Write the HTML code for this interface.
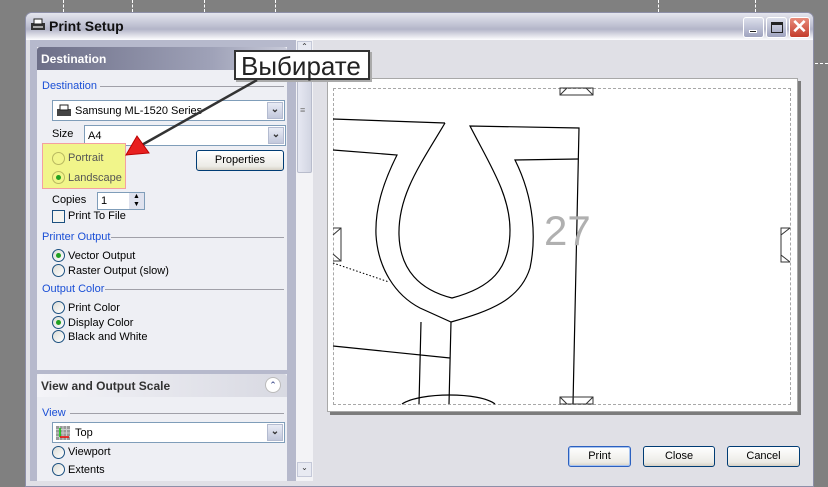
<!DOCTYPE html><html><head><meta charset="utf-8"><style>
*{margin:0;padding:0;box-sizing:border-box}
body{width:828px;height:481px;background:#808080;position:relative;overflow:hidden;font-family:"Liberation Sans",sans-serif;font-size:11px;color:#000}
.a{position:absolute}
.t{position:absolute;white-space:nowrap}
.blue{color:#1a4fd6}
.rad{position:absolute;width:13px;height:13px;border-radius:50%;border:1px solid #1c5180;background:linear-gradient(135deg,#dcdcd6,#fff)}
.rad.on::after{content:"";position:absolute;left:3px;top:3px;width:5px;height:5px;border-radius:50%;background:#21a121}
.btn{position:absolute;border:1px solid #003c74;border-radius:3px;background:linear-gradient(#fff,#ecebe6 80%,#d6d0c5);text-align:center;font-size:11px;line-height:19px}
.dd{position:absolute;background:#fff;border:1px solid #7f9db9}
.dda{position:absolute;right:1px;top:1px;width:16px;bottom:1px;background:linear-gradient(#e8ebf5,#c2c8dc);border:1px solid #b3bbd0;font-size:10px;font-weight:bold;text-align:center;line-height:14px;color:#333}
.line{position:absolute;height:1px;background:#a0a0a8}
</style></head><body>
<div class="a" style="left:63px;top:0;height:12px;border-left:1px dashed #fff"></div>
<div class="a" style="left:132px;top:0;height:12px;border-left:1px dashed #fff"></div>
<div class="a" style="left:204px;top:0;height:12px;border-left:1px dashed #fff"></div>
<div class="a" style="left:275px;top:0;height:12px;border-left:1px dashed #fff"></div>
<div class="a" style="left:658px;top:0;height:12px;border-left:1px dashed #fff"></div>
<div class="a" style="left:755px;top:0;height:12px;border-left:1px dashed #fff"></div>
<div class="a" style="left:815px;top:63px;width:13px;border-top:1px dashed #fff"></div>
<div class="a" style="left:25px;top:12px;width:789px;height:475px;border:1px solid #8d8fa8;border-radius:7px 7px 0 0;background:#e0e0e6"></div>
<div class="a" style="left:26px;top:13px;width:787px;height:27px;border-radius:6px 6px 0 0;background:linear-gradient(#e4e5ee,#c4c6d6 40%,#b3b5c8 60%,#fefeff)"></div>
<svg class="a" style="left:30px;top:17px" width="16" height="16"><rect x="1" y="6" width="14" height="7" fill="#333"/><rect x="4" y="2" width="8" height="5" fill="#fff" stroke="#222"/><rect x="3" y="9" width="10" height="2" fill="#aaa"/></svg>
<div class="t" style="left:49px;top:18px;font-size:14px;font-weight:bold;color:#111">Print Setup</div>
<div class="a" style="left:743px;top:17px;width:21px;height:21px;border:1px solid #fff;border-radius:3px;background:linear-gradient(#dcdfeb,#9fa3bf)"><div class="a" style="left:5px;top:12px;width:8px;height:3px;background:#222;border:1px solid #fff"></div></div>
<div class="a" style="left:766px;top:17px;width:21px;height:21px;border:1px solid #fff;border-radius:3px;background:linear-gradient(#dcdfeb,#9fa3bf)"><div class="a" style="left:4px;top:4px;width:12px;height:11px;border:1px solid #222;border-top-width:3px"></div></div>
<div class="a" style="left:789px;top:17px;width:21px;height:21px;border:1px solid #fff;border-radius:3px;background:linear-gradient(#e88c7c,#c43c2c);color:#fff;font-size:19px;line-height:19px;text-align:center;font-weight:bold">✕</div>
<div class="a" style="left:30px;top:40px;width:266px;height:441px;background:#b6b9cc"></div>
<div class="a" style="left:37px;top:47px;width:250px;height:323px;background:#eeeff4"></div>
<div class="a" style="left:37px;top:47px;width:250px;height:23px;background:linear-gradient(90deg,#6d6f88,#9fa2b8 70%,#c7c9d8);border-radius:3px 3px 0 0"></div>
<div class="t" style="left:41px;top:52px;font-weight:bold;color:#fff;font-size:12px">Destination</div>
<div class="t blue" style="left:42px;top:80px">Destination</div><div class="line" style="left:100px;top:86px;width:184px"></div>
<div class="dd" style="left:52px;top:100px;width:233px;height:21px"><svg class="a" style="left:3px;top:3px" width="16" height="14"><rect x="1" y="5" width="14" height="7" fill="#444"/><rect x="4" y="1" width="8" height="5" fill="#fff" stroke="#222"/></svg><div class="t" style="left:22px;top:4px">Samsung ML-1520 Series</div><div class="dda">⌄</div></div>
<div class="t" style="left:52px;top:128px">Size</div>
<div class="dd" style="left:84px;top:125px;width:202px;height:21px"><div class="t" style="left:3px;top:4px">A4</div><div class="dda">⌄</div></div>
<div class="a" style="left:42px;top:143px;width:84px;height:46px;background:#f1f58a;border:1px solid #f4a0a0"></div>
<div class="rad" style="left:52px;top:152px;border-color:#b8b860;background:#f1f58a"></div><div class="t" style="left:68px;top:152px;color:#555">Portrait</div>
<div class="rad on" style="left:52px;top:171px;border-color:#b8b860;background:#f1f58a"></div><div class="t" style="left:68px;top:172px;color:#555">Landscape</div>
<div class="btn" style="left:196px;top:150px;width:88px;height:21px">Properties</div>
<div class="t" style="left:52px;top:194px">Copies</div>
<div class="a" style="left:97px;top:192px;width:48px;height:18px;background:#fff;border:1px solid #7f9db9"><div class="t" style="left:3px;top:2px">1</div><div class="a" style="right:0;top:0;width:15px;height:16px;background:#dfe2ee;font-size:7px;line-height:8px;text-align:center">▲<br>▼</div></div>
<div class="a" style="left:52px;top:210px;width:13px;height:13px;border:1px solid #1c5180;background:#f4f4f0"></div><div class="t" style="left:68px;top:210px">Print To File</div>
<div class="t blue" style="left:42px;top:231px">Printer Output</div><div class="line" style="left:111px;top:237px;width:173px"></div>
<div class="rad on" style="left:52px;top:249px"></div><div class="t" style="left:68px;top:250px">Vector Output</div>
<div class="rad" style="left:52px;top:264px"></div><div class="t" style="left:68px;top:265px">Raster Output (slow)</div>
<div class="t blue" style="left:42px;top:283px">Output Color</div><div class="line" style="left:105px;top:289px;width:179px"></div>
<div class="rad" style="left:52px;top:301px"></div><div class="t" style="left:68px;top:302px">Print Color</div>
<div class="rad on" style="left:52px;top:316px"></div><div class="t" style="left:68px;top:317px">Display Color</div>
<div class="rad" style="left:52px;top:330px"></div><div class="t" style="left:68px;top:331px">Black and White</div>
<div class="a" style="left:37px;top:374px;width:250px;height:107px;background:#eeeff4"></div>
<div class="a" style="left:37px;top:374px;width:250px;height:23px;background:linear-gradient(90deg,#f4f4f8,#d8d9e2);border-radius:3px 3px 0 0"></div>
<div class="t" style="left:41px;top:379px;font-weight:bold;font-size:12px;color:#333">View and Output Scale</div>
<div class="a" style="left:265px;top:377px;width:16px;height:16px;border-radius:50%;background:#fff;border:1px solid #bbb;font-size:9px;text-align:center;line-height:14px;color:#2a3a80">⌃</div>
<div class="t blue" style="left:42px;top:407px">View</div><div class="line" style="left:70px;top:413px;width:214px"></div>
<div class="dd" style="left:52px;top:422px;width:233px;height:21px"><svg class="a" style="left:3px;top:3px" width="14" height="14"><rect width="14" height="14" fill="#999"/><path d="M0 3.5H14M0 7H14M0 10.5H14M3.5 0V14M7 0V14M10.5 0V14" stroke="#ccc"/><path d="M4 2V11" stroke="#0c0" stroke-width="1.5"/><path d="M4 11H13" stroke="#e00" stroke-width="1.5"/></svg><div class="t" style="left:22px;top:4px">Top</div><div class="dda">⌄</div></div>
<div class="rad" style="left:52px;top:446px"></div><div class="t" style="left:68px;top:446px">Viewport</div>
<div class="rad" style="left:52px;top:463px"></div><div class="t" style="left:68px;top:464px">Extents</div>
<div class="a" style="left:296px;top:40px;width:17px;height:441px;background:#f3f3f6"></div>
<div class="a" style="left:297px;top:41px;width:15px;height:15px;background:#e8eaf2;border:1px solid #c4c8d8;font-size:8px;text-align:center;color:#333">⌃</div>
<div class="a" style="left:297px;top:57px;width:15px;height:116px;background:linear-gradient(90deg,#e6e8f2,#d2d5e2);border:1px solid #b8bccc;border-radius:2px"></div>
<div class="t" style="left:300px;top:105px;font-size:9px;color:#777">≡</div>
<div class="a" style="left:297px;top:462px;width:15px;height:15px;background:#e8eaf2;border:1px solid #c4c8d8;font-size:8px;text-align:center;color:#333">⌄</div>
<div class="a" style="left:330px;top:81px;width:471px;height:334px;background:#7c7c7c"></div>
<div class="a" style="left:327px;top:78px;width:471px;height:334px;background:#fff;border:1px solid #a8a8a8"></div>
<div class="a" style="left:333px;top:88px;width:458px;height:317px;border:1px dashed #a8a8a8"></div>
<svg class="a" style="left:0;top:0" width="828" height="481" fill="none" stroke="#000" stroke-width="1.2">
<path d="M333 119 L445 123"/>
<path d="M333 150 L397 155 C382 185 375 210 376 235 C378 268 395 295 420 308 L451 322 C490 311 520 300 530 268 C536 240 535 200 515 160 L578 159"/>
<path d="M445 123 C420 165 398 195 399 235 C400 270 420 290 452 298 C490 288 510 270 510 230 C510 195 490 165 470 126 L579 128 L573 404"/>
<path d="M421 322 L419 404 M451 322 L449 404 M333 346 L450 358"/>
<path d="M333 263 L389 282" stroke-dasharray="1.5 2" stroke-width="1"/>
<path d="M402 404 C420 392 480 392 495 404" />
<g stroke-width="1" stroke="#333"><path d="M560 88H593V95H560Z M560 95L567 88 M593 95L586 88"/><path d="M560 404H593V397H560Z M560 397L567 404 M593 397L586 404"/><path d="M333 228H341V261H333 M333 235L341 228 M333 254L341 261"/><path d="M790 228H781V262H790 M781 235L790 228 M781 255L790 262"/></g>
</svg>
<div class="t" style="left:544px;top:207px;font-size:42px;color:#b0b0b0">27</div>
<div class="btn" style="left:568px;top:446px;width:63px;height:21px;border-color:#2b60c0;box-shadow:inset 0 0 0 1px #a8c4f0">Print</div>
<div class="btn" style="left:643px;top:446px;width:72px;height:21px">Close</div>
<div class="btn" style="left:727px;top:446px;width:73px;height:21px">Cancel</div>
<div class="a" style="left:234px;top:50px;width:136px;height:30px;background:#fff;border:2px solid #333;box-shadow:2px 2px 0 #aaa"></div>
<div class="t" style="left:241px;top:51px;font-size:26px;color:#222">Выбирате</div>
<svg class="a" style="left:0;top:0" width="828" height="481"><path d="M257 80 L140 146" stroke="#333" stroke-width="2.5"/><polygon points="126,155 149,153 137,136" fill="#e82020" stroke="#b00" stroke-width="1"/></svg>
</body></html>
